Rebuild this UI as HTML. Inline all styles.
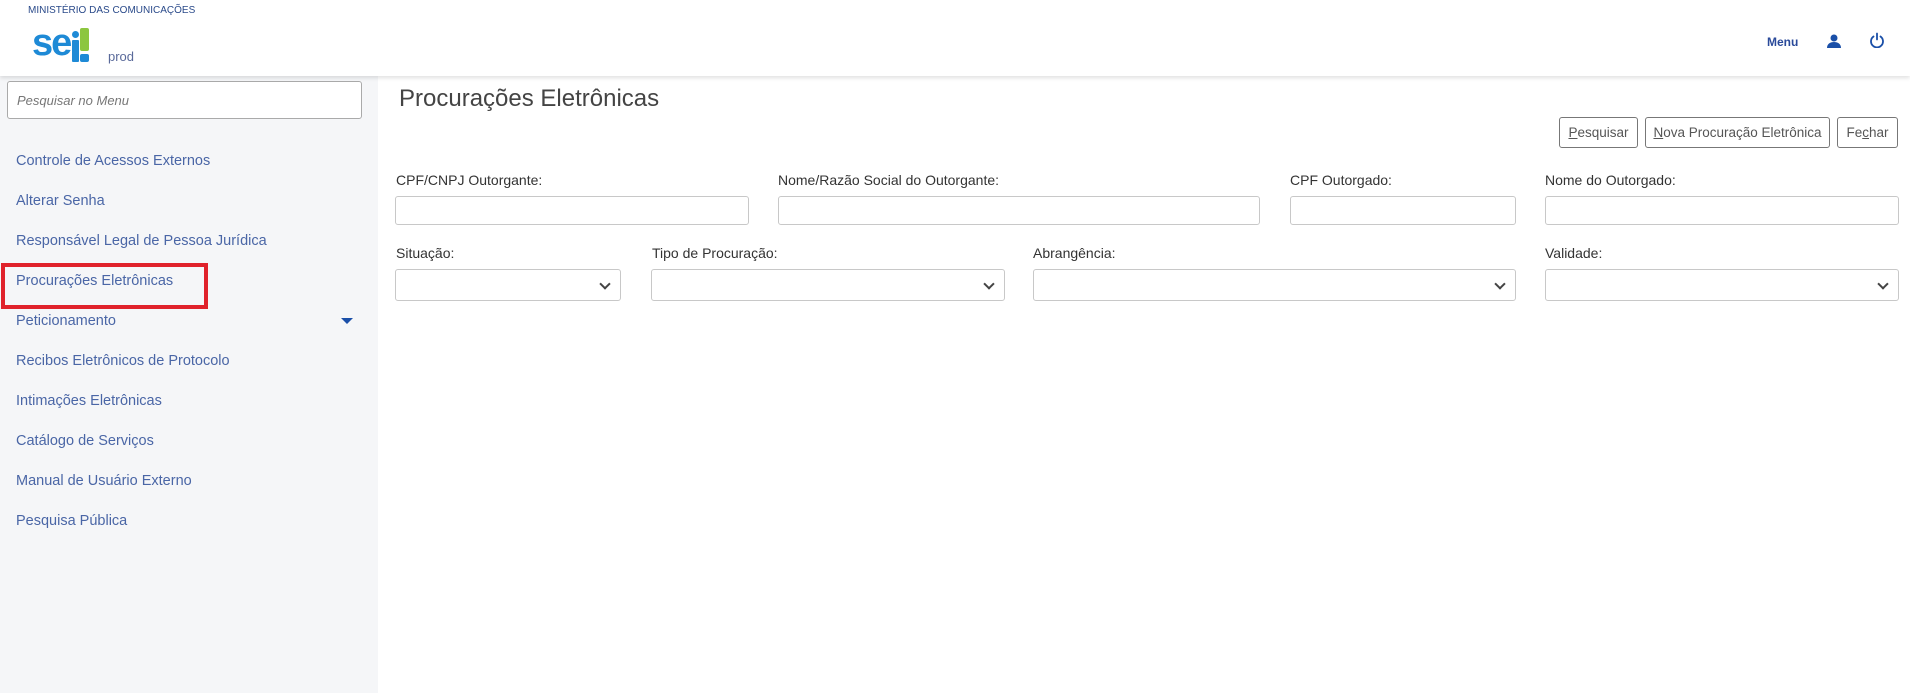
<!DOCTYPE html>
<html><head><meta charset="utf-8"><style>
*{box-sizing:border-box;margin:0;padding:0}
body{width:1910px;height:693px;background:#fff;font-family:"Liberation Sans",sans-serif;position:relative;overflow:hidden;color:#333}
.hdr{position:absolute;left:0;top:0;width:1910px;height:76px;background:#fff;box-shadow:0 2px 4px rgba(0,0,0,.12);z-index:2}
.side{position:absolute;left:0;top:76px;width:378px;height:617px;background:#f5f6f8}
.a{position:absolute}
.mi{position:absolute;left:16px;font-size:14.5px;color:#4a66a6}
.lbl{position:absolute;font-size:14px;color:#333}
.inp{position:absolute;border:1px solid #c8c8c8;border-radius:3px;background:#fff}
.sel::after{content:"";position:absolute;right:11px;top:10px;width:6px;height:6px;border-right:2px solid #444;border-bottom:2px solid #444;transform:rotate(45deg)}
.btn{position:absolute;top:117px;height:31px;border:1px solid #777;border-radius:3px;font-size:13.5px;color:#555;text-align:center;line-height:29px;background:#fff}
</style></head><body>
<div class="hdr">
<div class="a" style="left:28px;top:5px;font-size:10px;color:#2a4a8a">MINISTÉRIO DAS COMUNICAÇÕES</div>
<div class="a" style="left:32px;top:23px;font-size:38px;font-weight:bold;color:#1e8ad6;letter-spacing:-2px;line-height:40px">se</div>
<div class="a" style="left:72px;top:40px;width:7px;height:22px;background:#1e8ad6;border-radius:1px"></div>
<div class="a" style="left:72px;top:31px;width:7px;height:7px;background:#1e8ad6;border-radius:50%"></div>
<div class="a" style="left:80px;top:28px;width:9px;height:23px;background:#8cc63f;border-radius:2px"></div>
<div class="a" style="left:80px;top:54px;width:9px;height:8px;background:#1e8ad6;border-radius:2px"></div>
<div class="a" style="left:108px;top:49px;font-size:13px;color:#5a6a9a">prod</div>
<div class="a" style="left:1767px;top:35px;font-size:12px;font-weight:bold;color:#2a4a9a">Menu</div>
<svg class="a" style="left:1826px;top:33px" width="16" height="16" viewBox="0 0 16 16"><circle cx="8" cy="5" r="3.5" fill="#1a4fa8"/><path d="M1 15c0-4 3-6 7-6s7 2 7 6z" fill="#1a4fa8"/></svg>
<svg class="a" style="left:1869px;top:32px" width="16" height="16" viewBox="0 0 16 16"><path d="M4.5 4.5a6 6 0 1 0 7 0" fill="none" stroke="#1a4fa8" stroke-width="1.8" stroke-linecap="round"/><path d="M8 1.5v6" stroke="#1a4fa8" stroke-width="1.8" stroke-linecap="round"/></svg>
</div>
<div class="side">
<div class="inp" style="left:7px;top:5px;width:355px;height:38px;border-color:#aaa"><span style="position:absolute;left:9px;top:11px;font-size:13px;font-style:italic;color:#777">Pesquisar no Menu</span></div>
</div>
<div class="mi" style="top:153px">Controle de Acessos Externos</div>
<div class="mi" style="top:193px">Alterar Senha</div>
<div class="mi" style="top:233px">Responsável Legal de Pessoa Jurídica</div>
<div class="mi" style="top:273px">Procurações Eletrônicas</div>
<div class="mi" style="top:313px">Peticionamento</div>
<div class="a" style="left:341px;top:318px;width:0;height:0;border-left:6px solid transparent;border-right:6px solid transparent;border-top:6px solid #1a4fa8"></div>
<div class="mi" style="top:353px">Recibos Eletrônicos de Protocolo</div>
<div class="mi" style="top:393px">Intimações Eletrônicas</div>
<div class="mi" style="top:433px">Catálogo de Serviços</div>
<div class="mi" style="top:473px">Manual de Usuário Externo</div>
<div class="mi" style="top:513px">Pesquisa Pública</div>
<div class="a" style="left:1px;top:263px;width:207px;height:46px;border:4px solid #e0222b"></div>
<div class="a" style="left:399px;top:85px;font-size:24px;color:#444">Procurações Eletrônicas</div>
<div class="btn" style="left:1559px;width:79px"><u>P</u>esquisar</div>
<div class="btn" style="left:1645px;width:185px"><u>N</u>ova Procuração Eletrônica</div>
<div class="btn" style="left:1837px;width:61px">Fe<u>c</u>har</div>
<div class="lbl" style="left:396px;top:172px">CPF/CNPJ Outorgante:</div>
<div class="lbl" style="left:778px;top:172px">Nome/Razão Social do Outorgante:</div>
<div class="lbl" style="left:1290px;top:172px">CPF Outorgado:</div>
<div class="lbl" style="left:1545px;top:172px">Nome do Outorgado:</div>
<div class="inp" style="left:395px;top:196px;width:354px;height:29px"></div>
<div class="inp" style="left:778px;top:196px;width:482px;height:29px"></div>
<div class="inp" style="left:1290px;top:196px;width:226px;height:29px"></div>
<div class="inp" style="left:1545px;top:196px;width:354px;height:29px"></div>
<div class="lbl" style="left:396px;top:245px">Situação:</div>
<div class="lbl" style="left:652px;top:245px">Tipo de Procuração:</div>
<div class="lbl" style="left:1033px;top:245px">Abrangência:</div>
<div class="lbl" style="left:1545px;top:245px">Validade:</div>
<div class="inp sel" style="left:395px;top:269px;width:226px;height:32px"></div>
<div class="inp sel" style="left:651px;top:269px;width:354px;height:32px"></div>
<div class="inp sel" style="left:1033px;top:269px;width:483px;height:32px"></div>
<div class="inp sel" style="left:1545px;top:269px;width:354px;height:32px"></div>
</body></html>
